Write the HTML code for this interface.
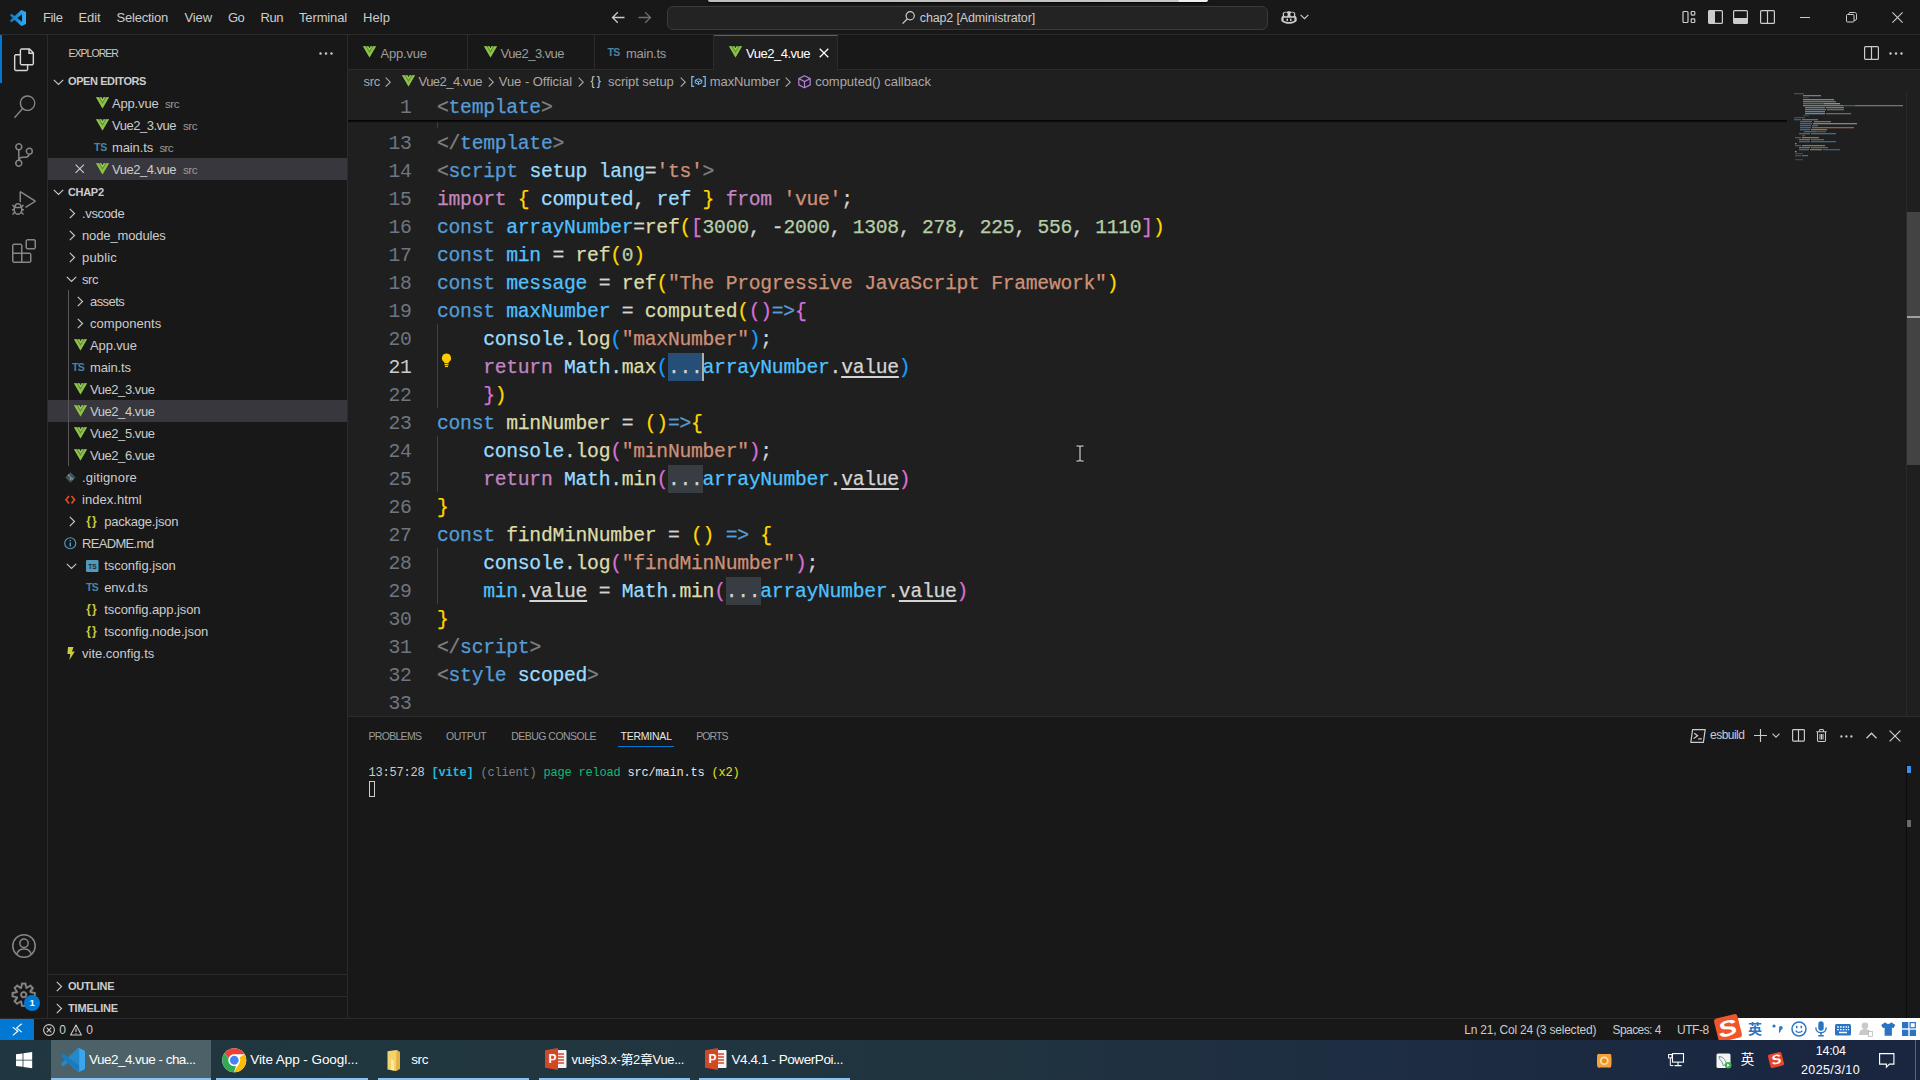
<!DOCTYPE html>
<html lang="en"><head><meta charset="utf-8"><title>Vue2_4.vue - chap2 - Visual Studio Code</title>
<style>
*{box-sizing:border-box;margin:0;padding:0}
html,body{width:1920px;height:1080px;overflow:hidden;background:#181818}
body{position:relative;font-family:"Liberation Sans","Noto Sans CJK SC",sans-serif;font-size:13px;color:#cccccc}
.a{position:absolute;white-space:pre}
svg{position:absolute;overflow:visible}
.cl{position:absolute;left:0;height:28px;width:1572px;white-space:pre;font-family:"Liberation Mono",monospace;font-size:19.7px;letter-spacing:-0.27px;line-height:28px}
.cl .num{position:absolute;left:0;top:2px;width:63.5px;text-align:right;color:#6e7681}
.cl .num.cur{color:#cccccc}
.cl .code{position:absolute;left:89px;top:2px;color:#d4d4d4;-webkit-text-stroke:0.25px}
.guide{position:absolute;width:1px;background:#404040}
</style></head>
<body>
<div class="a" style="left:0px;top:0px;width:1920px;height:35px;background:#181818;border-bottom:1px solid #2b2b2b"></div>
<div class="a" style="left:708px;top:0px;width:500px;height:2px;background:linear-gradient(90deg,#bdbdbd 0%,#c6c6c6 94%,#f0f0f0 94.2%,#f0f0f0 100%);border-radius:0 0 8px 8px;box-shadow:0 1px 2px #000"></div>
<svg style="left:10px;top:9.5px" width="16" height="16" viewBox="0 0 100 100" ><defs><linearGradient id="vsg" x1="0" y1="0" x2="1" y2="0"><stop offset="0" stop-color="#1072b8"/><stop offset="0.55" stop-color="#1f95e0"/><stop offset="1" stop-color="#35adf5"/></linearGradient></defs><path fill="url(#vsg)" fill-rule="evenodd" d="M70.9 99.3c1.6.6 3.4.6 5-.2l20.600-9.900c2.200-1 3.500-3.200 3.500-5.600V16.400c0-2.400-1.400-4.600-3.500-5.600L75.900.9c-2.100-1-4.500-.8-6.400.6-.3.2-.5.4-.8.7L29.400 38.100 12.200 25.100c-1.600-1.200-3.800-1.100-5.300.2l-5.500 5c-1.800 1.700-1.800 4.500 0 6.200L16.300 50 1.400 63.500c-1.800 1.700-1.800 4.500 0 6.200l5.500 5c1.500 1.400 3.700 1.500 5.300.2l17.200-13 39.400 35.900c.6.600 1.400 1.100 2.200 1.400zM75 27.300L45.100 50 75 72.700V27.300z"/></svg>
<span class="a" style="left:43.00px;top:7.00px;line-height:21px;font-size:13px;letter-spacing:-0.363px;color:#cccccc;">File</span>
<span class="a" style="left:78.50px;top:7.00px;line-height:21px;font-size:13px;letter-spacing:-0.102px;color:#cccccc;">Edit</span>
<span class="a" style="left:116.50px;top:7.00px;line-height:21px;font-size:13px;letter-spacing:-0.220px;color:#cccccc;">Selection</span>
<span class="a" style="left:184.50px;top:7.00px;line-height:21px;font-size:13px;letter-spacing:-0.113px;color:#cccccc;">View</span>
<span class="a" style="left:228.00px;top:7.00px;line-height:21px;font-size:13px;letter-spacing:-0.672px;color:#cccccc;">Go</span>
<span class="a" style="left:260.50px;top:7.00px;line-height:21px;font-size:13px;letter-spacing:-0.453px;color:#cccccc;">Run</span>
<span class="a" style="left:299.00px;top:7.00px;line-height:21px;font-size:13px;letter-spacing:-0.141px;color:#cccccc;">Terminal</span>
<span class="a" style="left:363.00px;top:7.00px;line-height:21px;font-size:13px;letter-spacing:0.062px;color:#cccccc;">Help</span>
<svg style="left:611px;top:11px" width="14" height="13" viewBox="0 0 14 13" ><path d="M13.500 6.500H1.800M6.800 1.200L1.500 6.500l5.300 5.300" fill="none" stroke="#cccccc" stroke-width="1.300"/></svg>
<svg style="left:638px;top:11px" width="14" height="13" viewBox="0 0 14 13" ><path d="M.5 6.500h11.700M7.200 1.200l5.300 5.300-5.300 5.300" fill="none" stroke="#6f6f6f" stroke-width="1.300"/></svg>
<div class="a" style="left:667px;top:5.5px;width:601px;height:24px;background:#232323;border:1px solid #3a3a3a;border-radius:6px"></div>
<svg style="left:901.5px;top:10.5px" width="13" height="13" viewBox="0 0 13 13" ><circle cx="8.200" cy="4.800" r="4.100" fill="none" stroke="#cccccc" stroke-width="1.200"/><path d="M5.400 7.800L.6 12.600" stroke="#cccccc" stroke-width="1.300"/></svg>
<span class="a" style="left:919.80px;top:7.50px;line-height:20px;font-size:12.5px;letter-spacing:-0.139px;color:#cccccc;">chap2 [Administrator]</span>
<svg style="left:1281px;top:10px" width="16" height="14" viewBox="0 0 16 14" ><path d="M8 1.200c-1.200 0-1.900.4-2.400.9-.7-.4-2.400-.5-3.300.5C1.500 3.500 1.600 5 1.900 5.800 1 6.500.3 7.600.3 8.600v1.600c0 .5.200.9.600 1.200C2.800 12.900 5.400 13.700 8 13.700s5.200-.8 7.100-2.300c.4-.3.600-.7.600-1.200V8.600c0-1-.7-2.100-1.600-2.800.3-.8.400-2.300-.4-3.200-.9-1-2.600-.9-3.300-.5-.5-.5-1.200-.9-2.400-.9z" fill="#cccccc"/><rect x="2.900" y="2.600" width="3.800" height="3.600" rx="1.500" fill="#181818"/><rect x="9.300" y="2.600" width="3.800" height="3.600" rx="1.500" fill="#181818"/><path d="M2.600 7.800h10.800v3c-1.700.9-3.500 1.300-5.400 1.300s-3.700-.4-5.400-1.300z" fill="#181818"/><rect x="5.500" y="8.400" width="1.500" height="2.600" rx=".5" fill="#cccccc"/><rect x="9" y="8.400" width="1.500" height="2.600" rx=".5" fill="#cccccc"/></svg>
<svg style="left:1300px;top:14px" width="9" height="6" viewBox="0 0 9 6" ><path d="M.6.800l3.900 3.900L8.400.8" fill="none" stroke="#cccccc" stroke-width="1.100"/></svg>
<svg style="left:1682px;top:10px" width="16" height="14" viewBox="0 0 16 14" ><rect x="1" y="1.500" width="5" height="11" rx="1" fill="none" stroke="#cccccc" stroke-width="1.200"/><rect x="9.200" y="1.500" width="3.600" height="3.600" rx=".8" fill="none" stroke="#cccccc" stroke-width="1.200"/><rect x="9.200" y="8.900" width="3.600" height="3.600" rx=".8" fill="none" stroke="#cccccc" stroke-width="1.200"/></svg>
<svg style="left:1707.5px;top:10px" width="15" height="14" viewBox="0 0 15 14" ><rect x=".6" y=".6" width="13.800" height="12.800" rx="1" fill="none" stroke="#cccccc" stroke-width="1.200"/><rect x=".6" y=".6" width="6.400" height="12.800" fill="#cccccc"/></svg>
<svg style="left:1733px;top:10px" width="15" height="14" viewBox="0 0 15 14" ><rect x=".6" y=".6" width="13.800" height="12.800" rx="1" fill="none" stroke="#cccccc" stroke-width="1.200"/><rect x=".6" y="8" width="13.800" height="5.400" fill="#cccccc"/></svg>
<svg style="left:1759.5px;top:10px" width="15" height="14" viewBox="0 0 15 14" ><rect x=".6" y=".6" width="13.800" height="12.800" rx="1" fill="none" stroke="#cccccc" stroke-width="1.200"/><path d="M7.500.6v12.800" stroke="#cccccc" stroke-width="1.200"/></svg>
<svg style="left:1800px;top:17px" width="10" height="1" viewBox="0 0 10 1" ><rect width="10" height="1" fill="#cccccc"/></svg>
<svg style="left:1845.5px;top:12px" width="11" height="11" viewBox="0 0 11 11" ><rect x=".5" y="2.500" width="7.500" height="7.500" rx="1" fill="none" stroke="#cccccc" stroke-width="1"/><path d="M2.700 2.500V1.800c0-.7.600-1.300 1.300-1.300h4.700c1 0 1.800.8 1.800 1.800V7c0 .7-.6 1.300-1.300 1.300H8" fill="none" stroke="#cccccc" stroke-width="1"/></svg>
<svg style="left:1892px;top:12px" width="11" height="11" viewBox="0 0 11 11" ><path d="M.4.400l10.200 10.200M10.600.4L.4 10.600" stroke="#cccccc" stroke-width="1.100"/></svg>
<div class="a" style="left:0px;top:35px;width:48px;height:983px;background:#181818;border-right:1px solid #2b2b2b"></div>
<div class="a" style="left:0px;top:35px;width:2px;height:48px;background:#0078d4;"></div>
<svg style="left:12.5px;top:47.5px" width="22" height="23.5" viewBox="0 0 23 24" ><path fill="#d7d7d7" d="M17.500 0h-9L7 1.500V6H2.500L1 7.500v15.070L2.500 24h12.070L16 22.570V18h4.700l1.300-1.430V4.500L17.500 0zm0 2.120l2.380 2.380H17.500V2.120zm-3 20.380h-12v-15H7v9.070L8.500 18h6v4.500zm6-6h-12v-15H16V6h4.500v10.500z"/></svg>
<svg style="left:13px;top:95px" width="23" height="23.5" viewBox="0 0 24 24" ><path fill="#868686" d="M15.250 0a8.250 8.250 0 0 0-6.180 13.720L1 22.880l1.120 1.120 8.050-9.120A8.251 8.251 0 1 0 15.250.010V0zm0 15a6.750 6.750 0 1 1 0-13.500 6.750 6.750 0 0 1 0 13.500z"/></svg>
<svg style="left:12px;top:143px" width="24" height="24" viewBox="0 0 24 24" ><path fill="#868686" d="M21.007 8.222A3.738 3.738 0 0 0 15.045 5.200a3.737 3.737 0 0 0 1.156 6.583 2.988 2.988 0 0 1-2.668 1.670h-2.990a4.456 4.456 0 0 0-2.989 1.165V7.400a3.737 3.737 0 1 0-1.494 0v9.117a3.776 3.776 0 1 0 1.816.099 2.990 2.990 0 0 1 2.668-1.667h2.990a4.484 4.484 0 0 0 4.223-3.039 3.736 3.736 0 0 0 3.250-3.687zM4.565 3.738a2.242 2.242 0 1 1 4.484 0 2.242 2.242 0 0 1-4.484 0zm4.484 16.441a2.242 2.242 0 1 1-4.484 0 2.242 2.242 0 0 1 4.484 0zm8.221-9.715a2.242 2.242 0 1 1 0-4.485 2.242 2.242 0 0 1 0 4.485z"/></svg>
<svg style="left:12px;top:191px" width="24" height="24" viewBox="0 0 24 24" ><path fill="#868686" d="M10.940 13.500l-1.320 1.320a3.730 3.730 0 0 0-7.240 0L1.060 13.500 0 14.560l1.720 1.720-.220.220V18H0v1.500h1.500v.080c.077.489.214.966.410 1.420L0 22.940 1.060 24l1.650-1.650A4.308 4.308 0 0 0 6 24a4.310 4.310 0 0 0 3.290-1.650L10.940 24 12 22.940 10.090 21c.198-.464.336-.951.410-1.450v-.1H12V18h-1.500v-1.500l-.220-.220L12 14.560l-1.060-1.060zM6 13.500a2.250 2.250 0 0 1 2.250 2.250h-4.500A2.250 2.250 0 0 1 6 13.500zm3 6a3.330 3.330 0 0 1-3 3 3.330 3.330 0 0 1-3-3v-2.250h6v2.250zm14.760-9.900v1.260L13.500 17.370V15.600l8.500-5.370L9 2v9.460a5.070 5.070 0 0 0-1.500-.720V.630L8.640 0l15.120 9.600z"/></svg>
<svg style="left:12px;top:239px" width="24" height="24" viewBox="0 0 24 24" ><path fill="#868686" d="M13.500 1.500L15 0h7.500L24 1.500V9l-1.500 1.500H15L13.500 9V1.500zm1.500 0V9h7.500V1.500H15zM0 15V6l1.500-1.500H9L10.500 6v7.500H18l1.500 1.500v7.500L18 24H1.500L0 22.500V15zm9-1.500V6H1.500v7.500H9zM9 15H1.500v7.500H9V15zm1.500 7.500H18V15h-7.500v7.500z"/></svg>
<svg style="left:12px;top:934px" width="24" height="24" viewBox="0 0 24 24" ><circle cx="12" cy="12" r="11.200" fill="none" stroke="#868686" stroke-width="1.500"/><circle cx="12" cy="9.300" r="4.200" fill="none" stroke="#868686" stroke-width="1.500"/><path d="M4.800 20.300c.8-3.300 3.700-5.300 7.200-5.300s6.400 2 7.200 5.300" fill="none" stroke="#868686" stroke-width="1.500"/></svg>
<svg style="left:10.3px;top:980.8px" width="27.4" height="27.4" viewBox="0 0 16 16" ><path fill="#868686" stroke="#868686" stroke-width=".15" fill-rule="evenodd" d="M9.100 4.400L8.600 2H7.400l-.500 2.400-.700.300-2-1.300-.900.800 1.300 2-.200.700-2.400.500v1.200l2.400.500.300.800-1.300 2 .800.800 2-1.300.800.300.400 2.300h1.200l.500-2.400.800-.300 2 1.300.800-.800-1.300-2 .300-.800 2.300-.400V7.400l-2.400-.500-.300-.800 1.300-2-.800-.800-2 1.300-.700-.200zM9.400 1l.500 2.400L12 2.100l2 2-1.400 2.100 2.400.400v2.800l-2.400.500L14 12l-2 2-2.100-1.400-.500 2.400H6.600l-.500-2.400L4 13.900l-2-2 1.400-2.100L1 9.400V6.600l2.400-.500L2.100 4l2-2 2.100 1.400.400-2.400h2.800zm.600 7c0 1.100-.900 2-2 2s-2-.900-2-2 .900-2 2-2 2 .900 2 2zM8 9c.600 0 1-.400 1-1s-.400-1-1-1-1 .400-1 1 .400 1 1 1z"/></svg>
<div class="a" style="left:24px;top:994.5px;width:16px;height:16px;background:#0078d4;border-radius:8px"></div>
<span class="a" style="left:29.50px;top:995.00px;line-height:15px;font-size:9.5px;font-weight:700;color:#ffffff;">1</span>
<div class="a" style="left:348px;top:35px;width:1572px;height:35px;background:#181818;border-bottom:1px solid #2b2b2b"></div>
<div class="a" style="left:467px;top:35px;width:1px;height:35px;background:#2b2b2b;"></div>
<div class="a" style="left:594px;top:35px;width:1px;height:35px;background:#2b2b2b;"></div>
<div class="a" style="left:713px;top:35px;width:1px;height:35px;background:#2b2b2b;"></div>
<div class="a" style="left:714px;top:35px;width:124px;height:35px;background:#1f1f1f;border-top:1px solid #0078d4;border-right:1px solid #2b2b2b"></div>
<svg style="left:363px;top:45.8px" width="13.0" height="11.700000000000001" viewBox="0 0 16 14" ><path d="M0 0h16L8 14z" fill="#5f8f30"/><path d="M6.300 0L8 2.900 9.700 0z" fill="#1b1b1b"/><path d="M0 0h3.200L8 8.400 12.800 0H16L8 14z" fill="#8dc149"/><path d="M4.700 0h1.900L8 2.500 9.400 0h1.900L8 5.800z" fill="#9ad255"/></svg>
<span class="a" style="left:380.50px;top:43.00px;line-height:21px;font-size:13px;letter-spacing:-0.208px;color:#9d9d9d;">App.vue</span>
<svg style="left:483.75px;top:45.8px" width="13.0" height="11.700000000000001" viewBox="0 0 16 14" ><path d="M0 0h16L8 14z" fill="#5f8f30"/><path d="M6.300 0L8 2.900 9.700 0z" fill="#1b1b1b"/><path d="M0 0h3.200L8 8.400 12.800 0H16L8 14z" fill="#8dc149"/><path d="M4.700 0h1.900L8 2.500 9.400 0h1.900L8 5.800z" fill="#9ad255"/></svg>
<span class="a" style="left:500.50px;top:43.00px;line-height:21px;font-size:13px;letter-spacing:-0.542px;color:#9d9d9d;">Vue2_3.vue</span>
<span class="a" style="left:607.50px;top:43.50px;line-height:17px;font-size:10.5px;font-weight:700;letter-spacing:-0.611px;color:#4884a6;">TS</span>
<span class="a" style="left:626.00px;top:43.00px;line-height:21px;font-size:13px;letter-spacing:-0.272px;color:#9d9d9d;">main.ts</span>
<svg style="left:729px;top:45.8px" width="13.0" height="11.700000000000001" viewBox="0 0 16 14" ><path d="M0 0h16L8 14z" fill="#5f8f30"/><path d="M6.300 0L8 2.900 9.700 0z" fill="#1b1b1b"/><path d="M0 0h3.200L8 8.400 12.800 0H16L8 14z" fill="#8dc149"/><path d="M4.700 0h1.900L8 2.500 9.400 0h1.900L8 5.800z" fill="#9ad255"/></svg>
<span class="a" style="left:746.00px;top:43.00px;line-height:21px;font-size:13px;letter-spacing:-0.492px;color:#ffffff;">Vue2_4.vue</span>
<svg style="left:819px;top:48px" width="10" height="10" viewBox="0 0 10 10" ><path d="M.7.700l8.600 8.600M9.300.700L.7 9.300" stroke="#ffffff" stroke-width="1.300"/></svg>
<svg style="left:1863.5px;top:46px" width="15" height="14" viewBox="0 0 15 14" ><rect x=".6" y=".6" width="13.800" height="12.800" rx="1" fill="none" stroke="#cccccc" stroke-width="1.200"/><path d="M7.500.6v12.800" stroke="#cccccc" stroke-width="1.200"/></svg>
<svg style="left:1889px;top:52px" width="14" height="3" viewBox="0 0 14 3" ><circle cx="1.500" cy="1.500" r="1.200" fill="#cccccc"/><circle cx="7" cy="1.500" r="1.200" fill="#cccccc"/><circle cx="12.500" cy="1.500" r="1.200" fill="#cccccc"/></svg>
<div class="a" style="left:0px;top:1018px;width:1920px;height:22px;background:#181818;border-top:1px solid #2b2b2b"></div>
<div class="a" style="left:0px;top:1019px;width:34px;height:21px;background:#0078d4;"></div>
<svg style="left:11px;top:1023px" width="13" height="13" viewBox="0 0 13 13" ><path d="M1.800 4.100L6.800 8.200 1.800 12.400M10.700.800L5.700 4.900l5 4.200" fill="none" stroke="#ffffff" stroke-width="1.150"/></svg>
<svg style="left:42.5px;top:1023.5px" width="12" height="12" viewBox="0 0 12 12" ><circle cx="6" cy="6" r="5.400" fill="none" stroke="#cccccc" stroke-width="1.100"/><path d="M3.700 3.700l4.600 4.600M8.300 3.700L3.700 8.300" stroke="#cccccc" stroke-width="1.100"/></svg>
<span class="a" style="left:59.25px;top:1020.70px;line-height:19px;font-size:12px;letter-spacing:-0.438px;color:#cccccc;">0</span>
<svg style="left:70px;top:1023.5px" width="12" height="12" viewBox="0 0 12 12" ><path d="M6 1L11.400 11H.6z" fill="none" stroke="#cccccc" stroke-width="1.100" stroke-linejoin="round"/><path d="M6 4.500v3.500M6 9v1.100" stroke="#cccccc" stroke-width="1.100"/></svg>
<span class="a" style="left:86.25px;top:1020.70px;line-height:19px;font-size:12px;letter-spacing:0.062px;color:#cccccc;">0</span>
<span class="a" style="left:1464.25px;top:1020.70px;line-height:19px;font-size:12px;letter-spacing:-0.209px;color:#cccccc;">Ln 21, Col 24 (3 selected)</span>
<span class="a" style="left:1612.50px;top:1020.70px;line-height:19px;font-size:12px;letter-spacing:-0.569px;color:#cccccc;">Spaces: 4</span>
<span class="a" style="left:1677.00px;top:1020.70px;line-height:19px;font-size:12px;letter-spacing:-0.450px;color:#cccccc;">UTF-8</span>
<div class="a" style="left:48px;top:35px;width:300px;height:983px;background:#181818;border-right:1px solid #2b2b2b"></div>
<span class="a" style="left:68.40px;top:44.90px;line-height:17px;font-size:10.5px;letter-spacing:-0.948px;color:#cccccc;">EXPLORER</span>
<svg style="left:318.5px;top:51.8px" width="14" height="3" viewBox="0 0 14 3" ><circle cx="1.500" cy="1.500" r="1.200" fill="#cccccc"/><circle cx="7" cy="1.500" r="1.200" fill="#cccccc"/><circle cx="12.500" cy="1.500" r="1.200" fill="#cccccc"/></svg>
<svg style="left:53px;top:78.5px" width="11" height="6.5" viewBox="0 0 11 6.5" ><path d="M.8.800l4.700 4.700L10.200.8" fill="none" stroke="#c5c5c5" stroke-width="1.200"/></svg>
<span class="a" style="left:68.00px;top:72.30px;line-height:18px;font-size:11px;font-weight:700;letter-spacing:-0.411px;color:#cccccc;">OPEN EDITORS</span>
<div class="a" style="left:48px;top:158px;width:299px;height:22px;background:#37373d;"></div>
<svg style="left:95.8px;top:97.0px" width="13.0" height="11.700000000000001" viewBox="0 0 16 14" ><path d="M0 0h16L8 14z" fill="#5f8f30"/><path d="M6.300 0L8 2.900 9.700 0z" fill="#1b1b1b"/><path d="M0 0h3.200L8 8.400 12.800 0H16L8 14z" fill="#8dc149"/><path d="M4.700 0h1.900L8 2.500 9.400 0h1.900L8 5.800z" fill="#9ad255"/></svg>
<span class="a" style="left:112.00px;top:93.20px;line-height:21px;font-size:13px;letter-spacing:-0.172px;color:#cccccc;">App.vue</span>
<span class="a" style="left:165.00px;top:94.30px;line-height:19px;font-size:11.7px;letter-spacing:-0.531px;color:#9a9a9a;">src</span>
<svg style="left:95.8px;top:119.0px" width="13.0" height="11.700000000000001" viewBox="0 0 16 14" ><path d="M0 0h16L8 14z" fill="#5f8f30"/><path d="M6.300 0L8 2.900 9.700 0z" fill="#1b1b1b"/><path d="M0 0h3.200L8 8.400 12.800 0H16L8 14z" fill="#8dc149"/><path d="M4.700 0h1.900L8 2.500 9.400 0h1.900L8 5.800z" fill="#9ad255"/></svg>
<span class="a" style="left:112.00px;top:115.20px;line-height:21px;font-size:13px;letter-spacing:-0.492px;color:#cccccc;">Vue2_3.vue</span>
<span class="a" style="left:183.00px;top:116.30px;line-height:19px;font-size:11.7px;letter-spacing:-0.531px;color:#9a9a9a;">src</span>
<span class="a" style="left:94.00px;top:139.20px;line-height:17px;font-size:10.5px;font-weight:700;letter-spacing:-0.211px;color:#4884a6;">TS</span>
<span class="a" style="left:112.00px;top:137.20px;line-height:21px;font-size:13px;letter-spacing:-0.129px;color:#cccccc;">main.ts</span>
<span class="a" style="left:159.40px;top:138.30px;line-height:19px;font-size:11.7px;letter-spacing:-0.665px;color:#9a9a9a;">src</span>
<svg style="left:95.8px;top:163.0px" width="13.0" height="11.700000000000001" viewBox="0 0 16 14" ><path d="M0 0h16L8 14z" fill="#5f8f30"/><path d="M6.300 0L8 2.900 9.700 0z" fill="#1b1b1b"/><path d="M0 0h3.200L8 8.400 12.800 0H16L8 14z" fill="#8dc149"/><path d="M4.700 0h1.900L8 2.500 9.400 0h1.900L8 5.800z" fill="#9ad255"/></svg>
<span class="a" style="left:112.00px;top:159.20px;line-height:21px;font-size:13px;letter-spacing:-0.492px;color:#cccccc;">Vue2_4.vue</span>
<span class="a" style="left:183.00px;top:160.30px;line-height:19px;font-size:11.7px;letter-spacing:-0.531px;color:#9a9a9a;">src</span>
<svg style="left:75.2px;top:164.3px" width="9.5" height="9.5" viewBox="0 0 9.5 9.5" ><path d="M.6.600l8.300 8.300M8.900.600L.6 8.900" stroke="#cccccc" stroke-width="1.150"/></svg>
<svg style="left:53px;top:189px" width="11" height="6.5" viewBox="0 0 11 6.5" ><path d="M.8.800l4.700 4.700L10.200.8" fill="none" stroke="#c5c5c5" stroke-width="1.200"/></svg>
<span class="a" style="left:68.00px;top:183.00px;line-height:18px;font-size:11px;font-weight:700;letter-spacing:-0.319px;color:#cccccc;">CHAP2</span>
<div class="a" style="left:48px;top:400px;width:299px;height:22px;background:#37373d;"></div>
<div class="a" style="left:68px;top:290px;width:1px;height:176px;background:#585858;"></div>
<svg style="left:68.75px;top:207.8px" width="6.5" height="11" viewBox="0 0 6.5 11" ><path d="M.8.800l4.700 4.700-4.700 4.700" fill="none" stroke="#c5c5c5" stroke-width="1.200"/></svg>
<span class="a" style="left:82.00px;top:202.80px;line-height:21px;font-size:13px;letter-spacing:-0.366px;color:#cccccc;">.vscode</span>
<svg style="left:68.75px;top:229.9px" width="6.5" height="11" viewBox="0 0 6.5 11" ><path d="M.8.800l4.700 4.700-4.700 4.700" fill="none" stroke="#c5c5c5" stroke-width="1.200"/></svg>
<span class="a" style="left:82.00px;top:224.90px;line-height:21px;font-size:13px;letter-spacing:-0.129px;color:#cccccc;">node_modules</span>
<svg style="left:68.75px;top:251.89999999999998px" width="6.5" height="11" viewBox="0 0 6.5 11" ><path d="M.8.800l4.700 4.700-4.700 4.700" fill="none" stroke="#c5c5c5" stroke-width="1.200"/></svg>
<span class="a" style="left:82.00px;top:246.90px;line-height:21px;font-size:13px;letter-spacing:0.172px;color:#cccccc;">public</span>
<svg style="left:65.5px;top:276.4px" width="11" height="6.5" viewBox="0 0 11 6.5" ><path d="M.8.800l4.700 4.700L10.200.8" fill="none" stroke="#c5c5c5" stroke-width="1.200"/></svg>
<span class="a" style="left:82.00px;top:268.90px;line-height:21px;font-size:13px;letter-spacing:-0.448px;color:#cccccc;">src</span>
<svg style="left:76.75px;top:296.1px" width="6.5" height="11" viewBox="0 0 6.5 11" ><path d="M.8.800l4.700 4.700-4.700 4.700" fill="none" stroke="#c5c5c5" stroke-width="1.200"/></svg>
<span class="a" style="left:90.00px;top:291.10px;line-height:21px;font-size:13px;letter-spacing:-0.555px;color:#cccccc;">assets</span>
<svg style="left:76.75px;top:318.0px" width="6.5" height="11" viewBox="0 0 6.5 11" ><path d="M.8.800l4.700 4.700-4.700 4.700" fill="none" stroke="#c5c5c5" stroke-width="1.200"/></svg>
<span class="a" style="left:90.00px;top:313.00px;line-height:21px;font-size:13px;letter-spacing:0.042px;color:#cccccc;">components</span>
<svg style="left:73.75px;top:338.7px" width="13.0" height="11.700000000000001" viewBox="0 0 16 14" ><path d="M0 0h16L8 14z" fill="#5f8f30"/><path d="M6.300 0L8 2.900 9.700 0z" fill="#1b1b1b"/><path d="M0 0h3.200L8 8.400 12.800 0H16L8 14z" fill="#8dc149"/><path d="M4.700 0h1.900L8 2.500 9.400 0h1.900L8 5.800z" fill="#9ad255"/></svg>
<span class="a" style="left:90.00px;top:335.00px;line-height:21px;font-size:13px;letter-spacing:-0.136px;color:#cccccc;">App.vue</span>
<span class="a" style="left:72.00px;top:359.10px;line-height:17px;font-size:10.5px;font-weight:700;letter-spacing:-0.586px;color:#4884a6;">TS</span>
<span class="a" style="left:90.00px;top:357.00px;line-height:21px;font-size:13px;letter-spacing:-0.165px;color:#cccccc;">main.ts</span>
<svg style="left:73.75px;top:382.7px" width="13.0" height="11.700000000000001" viewBox="0 0 16 14" ><path d="M0 0h16L8 14z" fill="#5f8f30"/><path d="M6.300 0L8 2.900 9.700 0z" fill="#1b1b1b"/><path d="M0 0h3.200L8 8.400 12.800 0H16L8 14z" fill="#8dc149"/><path d="M4.700 0h1.900L8 2.500 9.400 0h1.900L8 5.800z" fill="#9ad255"/></svg>
<span class="a" style="left:90.00px;top:379.00px;line-height:21px;font-size:13px;letter-spacing:-0.442px;color:#cccccc;">Vue2_3.vue</span>
<svg style="left:73.75px;top:404.7px" width="13.0" height="11.700000000000001" viewBox="0 0 16 14" ><path d="M0 0h16L8 14z" fill="#5f8f30"/><path d="M6.300 0L8 2.900 9.700 0z" fill="#1b1b1b"/><path d="M0 0h3.200L8 8.400 12.800 0H16L8 14z" fill="#8dc149"/><path d="M4.700 0h1.900L8 2.500 9.400 0h1.900L8 5.800z" fill="#9ad255"/></svg>
<span class="a" style="left:90.00px;top:401.00px;line-height:21px;font-size:13px;letter-spacing:-0.442px;color:#cccccc;">Vue2_4.vue</span>
<svg style="left:73.75px;top:426.7px" width="13.0" height="11.700000000000001" viewBox="0 0 16 14" ><path d="M0 0h16L8 14z" fill="#5f8f30"/><path d="M6.300 0L8 2.900 9.700 0z" fill="#1b1b1b"/><path d="M0 0h3.200L8 8.400 12.800 0H16L8 14z" fill="#8dc149"/><path d="M4.700 0h1.900L8 2.500 9.400 0h1.900L8 5.800z" fill="#9ad255"/></svg>
<span class="a" style="left:90.00px;top:423.00px;line-height:21px;font-size:13px;letter-spacing:-0.442px;color:#cccccc;">Vue2_5.vue</span>
<svg style="left:73.75px;top:448.7px" width="13.0" height="11.700000000000001" viewBox="0 0 16 14" ><path d="M0 0h16L8 14z" fill="#5f8f30"/><path d="M6.300 0L8 2.900 9.700 0z" fill="#1b1b1b"/><path d="M0 0h3.200L8 8.400 12.800 0H16L8 14z" fill="#8dc149"/><path d="M4.700 0h1.900L8 2.500 9.400 0h1.900L8 5.800z" fill="#9ad255"/></svg>
<span class="a" style="left:90.00px;top:445.00px;line-height:21px;font-size:13px;letter-spacing:-0.442px;color:#cccccc;">Vue2_6.vue</span>
<svg style="left:64.5px;top:472px" width="11" height="11" viewBox="0 0 11 11" ><path d="M5.500.3l5.200 5.200-5.200 5.200L.3 5.500z" fill="#41535b"/><path d="M3.600 3.200l3.600 3.600M5.400 5v3" stroke="#8a9aa2" stroke-width="1" fill="none"/><circle cx="3.600" cy="3.200" r=".9" fill="#8a9aa2"/><circle cx="7.200" cy="6.800" r=".9" fill="#8a9aa2"/></svg>
<span class="a" style="left:82.00px;top:467.00px;line-height:21px;font-size:13px;letter-spacing:0.152px;color:#cccccc;">.gitignore</span>
<svg style="left:65px;top:495px" width="10.5" height="9.5" viewBox="0 0 10.5 9.5" ><path d="M4 1L1 4.750 4 8.500M6.500 1l3 3.750-3 3.750" fill="none" stroke="#e44d26" stroke-width="1.700"/></svg>
<span class="a" style="left:82.00px;top:489.00px;line-height:21px;font-size:13px;letter-spacing:0.050px;color:#cccccc;">index.html</span>
<svg style="left:68.75px;top:516.0px" width="6.5" height="11" viewBox="0 0 6.5 11" ><path d="M.8.800l4.700 4.700-4.700 4.700" fill="none" stroke="#c5c5c5" stroke-width="1.200"/></svg>
<span class="a" style="left:86.25px;top:511.50px;line-height:19px;font-size:12px;font-weight:700;letter-spacing:1.203px;color:#cbcb41;">{}</span>
<span class="a" style="left:104.25px;top:511.00px;line-height:21px;font-size:13px;letter-spacing:-0.219px;color:#cccccc;">package.json</span>
<svg style="left:63.75px;top:537.3px" width="12.5" height="12.5" viewBox="0 0 12.5 12.5" ><circle cx="6.250" cy="6.250" r="5.500" fill="none" stroke="#519aba" stroke-width="1.200"/><path d="M6.250 5.400v4M6.250 3v1.300" stroke="#519aba" stroke-width="1.500"/></svg>
<span class="a" style="left:82.00px;top:533.00px;line-height:21px;font-size:13px;letter-spacing:-0.672px;color:#cccccc;">README.md</span>
<svg style="left:65.5px;top:562.5px" width="11" height="6.5" viewBox="0 0 11 6.5" ><path d="M.8.800l4.700 4.700L10.200.8" fill="none" stroke="#c5c5c5" stroke-width="1.200"/></svg>
<svg style="left:85.75px;top:559.5px" width="12.5" height="12" viewBox="0 0 12.5 12" ><rect width="12.500" height="12" rx="1.200" fill="#519aba"/></svg>
<span class="a" style="left:88.20px;top:562.00px;line-height:10px;font-size:6.5px;font-weight:700;letter-spacing:-0.006px;color:#1b2b34;">TS</span>
<span class="a" style="left:104.25px;top:555.00px;line-height:21px;font-size:13px;letter-spacing:-0.059px;color:#cccccc;">tsconfig.json</span>
<span class="a" style="left:86.00px;top:579.10px;line-height:17px;font-size:10.5px;font-weight:700;letter-spacing:-0.611px;color:#4884a6;">TS</span>
<span class="a" style="left:104.25px;top:577.00px;line-height:21px;font-size:13px;letter-spacing:-0.164px;color:#cccccc;">env.d.ts</span>
<span class="a" style="left:86.25px;top:599.50px;line-height:19px;font-size:12px;font-weight:700;letter-spacing:1.203px;color:#cbcb41;">{}</span>
<span class="a" style="left:104.25px;top:599.00px;line-height:21px;font-size:13px;letter-spacing:-0.078px;color:#cccccc;">tsconfig.app.json</span>
<span class="a" style="left:86.25px;top:621.50px;line-height:19px;font-size:12px;font-weight:700;letter-spacing:1.203px;color:#cbcb41;">{}</span>
<span class="a" style="left:104.25px;top:621.00px;line-height:21px;font-size:13px;letter-spacing:-0.044px;color:#cccccc;">tsconfig.node.json</span>
<svg style="left:67px;top:646.5px" width="8" height="13" viewBox="0 0 8 13" ><path d="M1 0h5.500L5 4.600h2.800L2.400 13l.9-6H.4z" fill="#cbcb41"/></svg>
<span class="a" style="left:82.00px;top:643.00px;line-height:21px;font-size:13px;letter-spacing:-0.001px;color:#cccccc;">vite.config.ts</span>
<div class="a" style="left:48px;top:974px;width:299px;height:1px;background:#2b2b2b;"></div>
<div class="a" style="left:48px;top:996px;width:299px;height:1px;background:#2b2b2b;"></div>
<svg style="left:55.5px;top:980.75px" width="6.5" height="11" viewBox="0 0 6.5 11" ><path d="M.8.800l4.700 4.700-4.700 4.700" fill="none" stroke="#c5c5c5" stroke-width="1.200"/></svg>
<span class="a" style="left:68.00px;top:977.25px;line-height:18px;font-size:11px;font-weight:700;letter-spacing:-0.290px;color:#cccccc;">OUTLINE</span>
<svg style="left:55.5px;top:1002.5px" width="6.5" height="11" viewBox="0 0 6.5 11" ><path d="M.8.800l4.700 4.700-4.700 4.700" fill="none" stroke="#c5c5c5" stroke-width="1.200"/></svg>
<span class="a" style="left:68.00px;top:999.00px;line-height:18px;font-size:11px;font-weight:700;letter-spacing:-0.168px;color:#cccccc;">TIMELINE</span>
<div class="a" style="left:348px;top:70px;width:1572px;height:646px;background:#1f1f1f;"></div>
<span class="a" style="left:363.50px;top:71.00px;line-height:21px;font-size:13px;letter-spacing:-0.281px;color:#a9a9a9;">src</span>
<svg style="left:385px;top:76.5px" width="6" height="10.5" viewBox="0 0 6 10.5" ><path d="M.7.700l4.500 4.500-4.500 4.500" fill="none" stroke="#a9a9a9" stroke-width="1.150"/></svg>
<svg style="left:401.75px;top:75.3px" width="13.0" height="11.700000000000001" viewBox="0 0 16 14" ><path d="M0 0h16L8 14z" fill="#5f8f30"/><path d="M6.300 0L8 2.900 9.700 0z" fill="#1b1b1b"/><path d="M0 0h3.200L8 8.400 12.800 0H16L8 14z" fill="#8dc149"/><path d="M4.700 0h1.900L8 2.500 9.400 0h1.900L8 5.800z" fill="#9ad255"/></svg>
<span class="a" style="left:418.50px;top:71.00px;line-height:21px;font-size:13px;letter-spacing:-0.542px;color:#a9a9a9;">Vue2_4.vue</span>
<svg style="left:487.5px;top:76.5px" width="6" height="10.5" viewBox="0 0 6 10.5" ><path d="M.7.700l4.500 4.500-4.500 4.500" fill="none" stroke="#a9a9a9" stroke-width="1.150"/></svg>
<span class="a" style="left:498.75px;top:71.00px;line-height:21px;font-size:13px;letter-spacing:-0.032px;color:#a9a9a9;">Vue - Official</span>
<svg style="left:577.5px;top:76.5px" width="6" height="10.5" viewBox="0 0 6 10.5" ><path d="M.7.700l4.500 4.500-4.500 4.500" fill="none" stroke="#a9a9a9" stroke-width="1.150"/></svg>
<span class="a" style="left:590.50px;top:71.00px;line-height:20px;font-size:12.5px;letter-spacing:2.070px;color:#cccccc;">{}</span>
<span class="a" style="left:608.00px;top:71.00px;line-height:21px;font-size:13px;letter-spacing:-0.061px;color:#a9a9a9;">script setup</span>
<svg style="left:679.5px;top:76.5px" width="6" height="10.5" viewBox="0 0 6 10.5" ><path d="M.7.700l4.500 4.500-4.500 4.500" fill="none" stroke="#a9a9a9" stroke-width="1.150"/></svg>
<svg style="left:690.5px;top:76px" width="15" height="11" viewBox="0 0 15 11" ><path d="M3.200.700H.8v9.600h2.400M11.800.700h2.400v9.600h-2.400" fill="none" stroke="#75beff" stroke-width="1.200"/><path d="M4.200 4.300l3.300-1.500 3.300 1.500v2.600L7.500 8.400 4.200 6.900z" fill="none" stroke="#75beff" stroke-width="1"/><path d="M4.200 4.300l3.300 1.500 3.300-1.500M7.500 5.800v2.600" fill="none" stroke="#75beff" stroke-width="1"/></svg>
<span class="a" style="left:709.75px;top:71.00px;line-height:21px;font-size:13px;letter-spacing:-0.089px;color:#a9a9a9;">maxNumber</span>
<svg style="left:785px;top:76.5px" width="6" height="10.5" viewBox="0 0 6 10.5" ><path d="M.7.700l4.500 4.500-4.500 4.500" fill="none" stroke="#a9a9a9" stroke-width="1.150"/></svg>
<svg style="left:798px;top:75px" width="13" height="13.5" viewBox="0 0 13 13.5" ><path d="M6.500.700l5.700 2.900v6.300l-5.700 2.900L.8 9.900V3.600z" fill="none" stroke="#b180d7" stroke-width="1.200" stroke-linejoin="round"/><path d="M.8 3.600l5.700 2.900 5.700-2.900M6.500 6.500v6.300" fill="none" stroke="#b180d7" stroke-width="1.200"/></svg>
<span class="a" style="left:815.20px;top:71.00px;line-height:21px;font-size:13px;letter-spacing:-0.028px;color:#a9a9a9;">computed() callback</span>
<div class="a" style="left:348px;top:70px;width:1572px;height:646px;overflow:hidden">
<div class="guide" style="left:89px;top:50px;height:8px"></div>
<div class="guide" style="left:89px;top:254px;height:84px"></div>
<div class="guide" style="left:89px;top:366px;height:56px"></div>
<div class="guide" style="left:89px;top:478px;height:56px"></div>
<div class="a" style="left:320px;top:283px;width:35px;height:28px;background:#264f78;"></div>
<div class="a" style="left:320px;top:395px;width:35px;height:28px;background:#373d43;"></div>
<div class="a" style="left:378px;top:507px;width:35px;height:28px;background:#373d43;"></div>
<div class="cl" style="top:58px"><span class="num">13</span><span class="code"><span style="color:#808080">&lt;/</span><span style="color:#569cd6">template</span><span style="color:#808080">&gt;</span></span></div>
<div class="cl" style="top:86px"><span class="num">14</span><span class="code"><span style="color:#808080">&lt;</span><span style="color:#569cd6">script</span><span style="color:#d4d4d4"> </span><span style="color:#9cdcfe">setup</span><span style="color:#d4d4d4"> </span><span style="color:#9cdcfe">lang</span><span style="color:#d4d4d4">=</span><span style="color:#ce9178">'ts'</span><span style="color:#808080">&gt;</span></span></div>
<div class="cl" style="top:114px"><span class="num">15</span><span class="code"><span style="color:#c586c0">import</span><span style="color:#d4d4d4"> </span><span style="color:#ffd700">{</span><span style="color:#d4d4d4"> </span><span style="color:#9cdcfe">computed</span><span style="color:#d4d4d4">, </span><span style="color:#9cdcfe">ref</span><span style="color:#d4d4d4"> </span><span style="color:#ffd700">}</span><span style="color:#d4d4d4"> </span><span style="color:#c586c0">from</span><span style="color:#d4d4d4"> </span><span style="color:#ce9178">'vue'</span><span style="color:#d4d4d4">;</span></span></div>
<div class="cl" style="top:142px"><span class="num">16</span><span class="code"><span style="color:#569cd6">const</span><span style="color:#d4d4d4"> </span><span style="color:#4fc1ff">arrayNumber</span><span style="color:#d4d4d4">=</span><span style="color:#dcdcaa">ref</span><span style="color:#ffd700">(</span><span style="color:#da70d6">[</span><span style="color:#b5cea8">3000</span><span style="color:#d4d4d4">, -</span><span style="color:#b5cea8">2000</span><span style="color:#d4d4d4">, </span><span style="color:#b5cea8">1308</span><span style="color:#d4d4d4">, </span><span style="color:#b5cea8">278</span><span style="color:#d4d4d4">, </span><span style="color:#b5cea8">225</span><span style="color:#d4d4d4">, </span><span style="color:#b5cea8">556</span><span style="color:#d4d4d4">, </span><span style="color:#b5cea8">1110</span><span style="color:#da70d6">]</span><span style="color:#ffd700">)</span></span></div>
<div class="cl" style="top:170px"><span class="num">17</span><span class="code"><span style="color:#569cd6">const</span><span style="color:#d4d4d4"> </span><span style="color:#4fc1ff">min</span><span style="color:#d4d4d4"> = </span><span style="color:#dcdcaa">ref</span><span style="color:#ffd700">(</span><span style="color:#b5cea8">0</span><span style="color:#ffd700">)</span></span></div>
<div class="cl" style="top:198px"><span class="num">18</span><span class="code"><span style="color:#569cd6">const</span><span style="color:#d4d4d4"> </span><span style="color:#4fc1ff">message</span><span style="color:#d4d4d4"> = </span><span style="color:#dcdcaa">ref</span><span style="color:#ffd700">(</span><span style="color:#ce9178">"The Progressive JavaScript Framework"</span><span style="color:#ffd700">)</span></span></div>
<div class="cl" style="top:226px"><span class="num">19</span><span class="code"><span style="color:#569cd6">const</span><span style="color:#d4d4d4"> </span><span style="color:#4fc1ff">maxNumber</span><span style="color:#d4d4d4"> = </span><span style="color:#dcdcaa">computed</span><span style="color:#ffd700">(</span><span style="color:#da70d6">()</span><span style="color:#569cd6">=&gt;</span><span style="color:#da70d6">{</span></span></div>
<div class="cl" style="top:254px"><span class="num">20</span><span class="code"><span style="color:#d4d4d4">    </span><span style="color:#9cdcfe">console</span><span style="color:#d4d4d4">.</span><span style="color:#dcdcaa">log</span><span style="color:#179fff">(</span><span style="color:#ce9178">"maxNumber"</span><span style="color:#179fff">)</span><span style="color:#d4d4d4">;</span></span></div>
<div class="cl" style="top:282px"><span class="num cur">21</span><span class="code"><span style="color:#d4d4d4">    </span><span style="color:#c586c0">return</span><span style="color:#d4d4d4"> </span><span style="color:#9cdcfe">Math</span><span style="color:#d4d4d4">.</span><span style="color:#dcdcaa">max</span><span style="color:#179fff">(</span><span style="color:#d4d4d4">...</span><span style="color:#4fc1ff">arrayNumber</span><span style="color:#d4d4d4">.</span><span style="color:#d4d4d4;text-decoration:underline;text-underline-offset:3px;text-decoration-thickness:1.5px">value</span><span style="color:#179fff">)</span></span></div>
<div class="cl" style="top:310px"><span class="num">22</span><span class="code"><span style="color:#d4d4d4">    </span><span style="color:#da70d6">}</span><span style="color:#ffd700">)</span></span></div>
<div class="cl" style="top:338px"><span class="num">23</span><span class="code"><span style="color:#569cd6">const</span><span style="color:#d4d4d4"> </span><span style="color:#dcdcaa">minNumber</span><span style="color:#d4d4d4"> = </span><span style="color:#ffd700">()</span><span style="color:#569cd6">=&gt;</span><span style="color:#ffd700">{</span></span></div>
<div class="cl" style="top:366px"><span class="num">24</span><span class="code"><span style="color:#d4d4d4">    </span><span style="color:#9cdcfe">console</span><span style="color:#d4d4d4">.</span><span style="color:#dcdcaa">log</span><span style="color:#da70d6">(</span><span style="color:#ce9178">"minNumber"</span><span style="color:#da70d6">)</span><span style="color:#d4d4d4">;</span></span></div>
<div class="cl" style="top:394px"><span class="num">25</span><span class="code"><span style="color:#d4d4d4">    </span><span style="color:#c586c0">return</span><span style="color:#d4d4d4"> </span><span style="color:#9cdcfe">Math</span><span style="color:#d4d4d4">.</span><span style="color:#dcdcaa">min</span><span style="color:#da70d6">(</span><span style="color:#d4d4d4">...</span><span style="color:#4fc1ff">arrayNumber</span><span style="color:#d4d4d4">.</span><span style="color:#d4d4d4;text-decoration:underline;text-underline-offset:3px;text-decoration-thickness:1.5px">value</span><span style="color:#da70d6">)</span></span></div>
<div class="cl" style="top:422px"><span class="num">26</span><span class="code"><span style="color:#ffd700">}</span></span></div>
<div class="cl" style="top:450px"><span class="num">27</span><span class="code"><span style="color:#569cd6">const</span><span style="color:#d4d4d4"> </span><span style="color:#dcdcaa">findMinNumber</span><span style="color:#d4d4d4"> = </span><span style="color:#ffd700">()</span><span style="color:#d4d4d4"> </span><span style="color:#569cd6">=&gt;</span><span style="color:#d4d4d4"> </span><span style="color:#ffd700">{</span></span></div>
<div class="cl" style="top:478px"><span class="num">28</span><span class="code"><span style="color:#d4d4d4">    </span><span style="color:#9cdcfe">console</span><span style="color:#d4d4d4">.</span><span style="color:#dcdcaa">log</span><span style="color:#da70d6">(</span><span style="color:#ce9178">"findMinNumber"</span><span style="color:#da70d6">)</span><span style="color:#d4d4d4">;</span></span></div>
<div class="cl" style="top:506px"><span class="num">29</span><span class="code"><span style="color:#d4d4d4">    </span><span style="color:#4fc1ff">min</span><span style="color:#d4d4d4">.</span><span style="color:#d4d4d4;text-decoration:underline;text-underline-offset:3px;text-decoration-thickness:1.5px">value</span><span style="color:#d4d4d4"> = </span><span style="color:#9cdcfe">Math</span><span style="color:#d4d4d4">.</span><span style="color:#dcdcaa">min</span><span style="color:#da70d6">(</span><span style="color:#d4d4d4">...</span><span style="color:#4fc1ff">arrayNumber</span><span style="color:#d4d4d4">.</span><span style="color:#d4d4d4;text-decoration:underline;text-underline-offset:3px;text-decoration-thickness:1.5px">value</span><span style="color:#da70d6">)</span></span></div>
<div class="cl" style="top:534px"><span class="num">30</span><span class="code"><span style="color:#ffd700">}</span></span></div>
<div class="cl" style="top:562px"><span class="num">31</span><span class="code"><span style="color:#808080">&lt;/</span><span style="color:#569cd6">script</span><span style="color:#808080">&gt;</span></span></div>
<div class="cl" style="top:590px"><span class="num">32</span><span class="code"><span style="color:#808080">&lt;</span><span style="color:#569cd6">style</span><span style="color:#d4d4d4"> </span><span style="color:#9cdcfe">scoped</span><span style="color:#808080">&gt;</span></span></div>
<div class="cl" style="top:618px"><span class="num">33</span><span class="code"></span></div>
<div class="a" style="left:354px;top:283px;width:2px;height:28px;background:#aeafad;"></div>
<svg style="left:92.5px;top:283px" width="11" height="15" viewBox="0 0 11 15" ><path d="M5.500.5a4.600 4.600 0 0 0-2.700 8.300c.5.400.7.900.7 1.400h4c0-.5.200-1 .7-1.400A4.600 4.600 0 0 0 5.500.5z" fill="#ffcc00"/><rect x="3.500" y="10.900" width="4" height="1.300" fill="#ffcc00"/><rect x="3.900" y="12.800" width="3.200" height="1.300" fill="#ffcc00"/></svg>
<div class="a" style="left:0px;top:50px;width:1439px;height:3px;background:linear-gradient(180deg,#000000 0%,#0a0a0a 40%,rgba(0,0,0,0) 100%);"></div>
<div class="a" style="left:0;top:22px;width:1439px;height:28px;background:#1f1f1f"><div class="cl" style="top:0"><span class="num">1</span><span class="code"><span style="color:#808080">&lt;</span><span style="color:#569cd6">template</span><span style="color:#808080">&gt;</span></span></div></div>
</div>
<svg style="left:1793.5px;top:93px" width="112" height="70" viewBox="0 0 112 70" ><rect x="0" y="0" width="10" height="1.300" fill="#4f83b3" opacity="0.5"/><rect x="9" y="2" width="18" height="1.300" fill="#c8c8c8" opacity="0.55"/><rect x="9" y="4" width="6" height="1.300" fill="#8a8a8a" opacity="0.3"/><rect x="9" y="6" width="31" height="1.300" fill="#c8c8c8" opacity="0.6"/><rect x="9" y="8" width="33" height="1.300" fill="#9fbf9a" opacity="0.6"/><rect x="9" y="10" width="37" height="1.300" fill="#9fbf9a" opacity="0.5"/><rect x="30" y="10" width="16" height="1.300" fill="#c8c8c8" opacity="0.4"/><rect x="9" y="12" width="40" height="1.300" fill="#c8c8c8" opacity="0.55"/><rect x="49" y="12" width="12" height="1.300" fill="#4f83b3" opacity="0.6"/><rect x="61" y="12" width="48" height="1.300" fill="#c8c8c8" opacity="0.5"/><rect x="11" y="14" width="20" height="1.300" fill="#8fc7e8" opacity="0.6"/><rect x="32" y="14" width="18" height="1.300" fill="#c8c8c8" opacity="0.55"/><rect x="11" y="16" width="21" height="1.300" fill="#8fc7e8" opacity="0.55"/><rect x="33" y="16" width="17" height="1.300" fill="#9fbf9a" opacity="0.5"/><rect x="11" y="18" width="20" height="1.300" fill="#8fc7e8" opacity="0.6"/><rect x="11" y="20" width="20" height="1.300" fill="#8fc7e8" opacity="0.65"/><rect x="32" y="20" width="25" height="1.300" fill="#c8c8c8" opacity="0.45"/><rect x="9" y="22" width="6" height="1.300" fill="#8a8a8a" opacity="0.3"/><rect x="0" y="24" width="11" height="1.300" fill="#4f83b3" opacity="0.5"/><rect x="0" y="26" width="7" height="1.300" fill="#4f83b3" opacity="0.6"/><rect x="8" y="26" width="16" height="1.300" fill="#8fc7e8" opacity="0.5"/><rect x="6" y="28" width="12" height="1.300" fill="#b884b4" opacity="0.55"/><rect x="20" y="28" width="17" height="1.300" fill="#c8c8c8" opacity="0.5"/><rect x="6" y="30" width="12" height="1.300" fill="#4f83b3" opacity="0.7"/><rect x="19" y="30" width="44" height="1.300" fill="#c8c8c8" opacity="0.6"/><rect x="6" y="32" width="11" height="1.300" fill="#4f83b3" opacity="0.7"/><rect x="18" y="32" width="6" height="1.300" fill="#c8c8c8" opacity="0.4"/><rect x="6" y="34" width="11" height="1.300" fill="#4f83b3" opacity="0.7"/><rect x="18" y="34" width="42" height="1.300" fill="#c88a70" opacity="0.65"/><rect x="6" y="36" width="10" height="1.300" fill="#4f83b3" opacity="0.7"/><rect x="17" y="36" width="16" height="1.300" fill="#d0c890" opacity="0.55"/><rect x="10" y="38" width="12" height="1.300" fill="#8fc7e8" opacity="0.4"/><rect x="22" y="38" width="10" height="1.300" fill="#c88a70" opacity="0.4"/><rect x="5" y="40" width="11" height="1.300" fill="#b884b4" opacity="0.55"/><rect x="17" y="40" width="25" height="1.300" fill="#4aa8e0" opacity="0.6"/><rect x="8" y="42" width="3" height="1.300" fill="#b884b4" opacity="0.4"/><rect x="1" y="44" width="6" height="1.300" fill="#4f83b3" opacity="0.6"/><rect x="8" y="44" width="17" height="1.300" fill="#d0c890" opacity="0.55"/><rect x="5" y="46" width="11" height="1.300" fill="#8fc7e8" opacity="0.5"/><rect x="17" y="46" width="13" height="1.300" fill="#c88a70" opacity="0.55"/><rect x="5" y="48" width="11" height="1.300" fill="#b884b4" opacity="0.5"/><rect x="17" y="48" width="25" height="1.300" fill="#4aa8e0" opacity="0.55"/><rect x="1" y="50" width="1.5" height="1.300" fill="#ffd700" opacity="0.7"/><rect x="1" y="52" width="6" height="1.300" fill="#4f83b3" opacity="0.6"/><rect x="8" y="52" width="23" height="1.300" fill="#d0c890" opacity="0.55"/><rect x="5" y="54" width="11" height="1.300" fill="#8fc7e8" opacity="0.5"/><rect x="17" y="54" width="17" height="1.300" fill="#c88a70" opacity="0.55"/><rect x="5" y="56" width="10" height="1.300" fill="#4aa8e0" opacity="0.55"/><rect x="16" y="56" width="12" height="1.300" fill="#c8c8c8" opacity="0.5"/><rect x="29" y="56" width="17" height="1.300" fill="#4aa8e0" opacity="0.5"/><rect x="1" y="58" width="1.5" height="1.300" fill="#ffd700" opacity="0.7"/><rect x="1" y="60" width="8" height="1.300" fill="#4f83b3" opacity="0.45"/><rect x="1" y="62" width="6" height="1.300" fill="#4f83b3" opacity="0.5"/><rect x="8" y="62" width="6" height="1.300" fill="#8fc7e8" opacity="0.45"/><rect x="1" y="66" width="8" height="1.300" fill="#4f83b3" opacity="0.4"/></svg>
<div class="a" style="left:1906px;top:92px;width:14px;height:624px;background:#1f1f1f;border-left:1px solid #2a2a2a"></div>
<div class="a" style="left:1907px;top:212px;width:13px;height:253px;background:#434343;"></div>
<div class="a" style="left:1907px;top:316px;width:13px;height:2px;background:#a0a0a0;"></div>
<div class="a" style="left:348px;top:716px;width:1572px;height:302px;background:#181818;border-top:1px solid #2b2b2b"></div>
<span class="a" style="left:368.50px;top:727.50px;line-height:17px;font-size:10.5px;letter-spacing:-0.701px;color:#9d9d9d;">PROBLEMS</span>
<span class="a" style="left:446.00px;top:727.50px;line-height:17px;font-size:10.5px;letter-spacing:-0.487px;color:#9d9d9d;">OUTPUT</span>
<span class="a" style="left:511.25px;top:727.50px;line-height:17px;font-size:10.5px;letter-spacing:-0.528px;color:#9d9d9d;">DEBUG CONSOLE</span>
<span class="a" style="left:620.50px;top:727.50px;line-height:17px;font-size:10.5px;letter-spacing:-0.230px;color:#e7e7e7;">TERMINAL</span>
<div class="a" style="left:618px;top:746px;width:56px;height:1px;background:#0078d4;"></div>
<span class="a" style="left:696.25px;top:727.50px;line-height:17px;font-size:10.5px;letter-spacing:-0.947px;color:#9d9d9d;">PORTS</span>
<span class="a" style="left:368.50px;top:763.50px;line-height:19px;font-size:12px;font-family:'Liberation Mono','Noto Sans CJK SC',monospace;letter-spacing:-0.201px;color:#cccccc;">13:57:28</span>
<span class="a" style="left:431.50px;top:763.50px;line-height:19px;font-size:12px;font-family:'Liberation Mono','Noto Sans CJK SC',monospace;font-weight:700;letter-spacing:-0.203px;color:#29b8db;">[vite]</span>
<span class="a" style="left:480.50px;top:763.50px;line-height:19px;font-size:12px;font-family:'Liberation Mono','Noto Sans CJK SC',monospace;letter-spacing:-0.201px;color:#7f7f7f;">(client)</span>
<span class="a" style="left:543.50px;top:763.50px;line-height:19px;font-size:12px;font-family:'Liberation Mono','Noto Sans CJK SC',monospace;letter-spacing:-0.202px;color:#0dbc79;">page reload</span>
<span class="a" style="left:627.50px;top:763.50px;line-height:19px;font-size:12px;font-family:'Liberation Mono','Noto Sans CJK SC',monospace;letter-spacing:-0.202px;color:#e5e5e5;">src/main.ts</span>
<span class="a" style="left:711.50px;top:763.50px;line-height:19px;font-size:12px;font-family:'Liberation Mono','Noto Sans CJK SC',monospace;letter-spacing:-0.203px;color:#e5e510;">(x2)</span>
<div class="a" style="left:368.5px;top:780.5px;width:6.5px;height:16px;background:transparent;border:1px solid #cccccc"></div>
<svg style="left:1690px;top:729px" width="16" height="14" viewBox="0 0 16 14" ><path d="M2.600.700h12.600l-1.800 12.600H.8z" fill="none" stroke="#cccccc" stroke-width="1.200" stroke-linejoin="round"/><path d="M4.300 4.200l3.300 2.600-4 2.600M8.200 9.800h3.600" fill="none" stroke="#cccccc" stroke-width="1.200"/></svg>
<span class="a" style="left:1710.00px;top:726.00px;line-height:19px;font-size:12px;letter-spacing:-0.519px;color:#cccccc;">esbuild</span>
<svg style="left:1754px;top:729px" width="13" height="13" viewBox="0 0 13 13" ><path d="M6.500 0v13M0 6.500h13" stroke="#cccccc" stroke-width="1.150"/></svg>
<svg style="left:1772px;top:733px" width="8" height="5" viewBox="0 0 8 5" ><path d="M.5.600l3.500 3.500L7.500.6" fill="none" stroke="#cccccc" stroke-width="1.100"/></svg>
<svg style="left:1792px;top:729.3px" width="13" height="12.7" viewBox="0 0 13 12.7" ><rect x=".6" y=".6" width="11.800" height="11.500" rx=".8" fill="none" stroke="#cccccc" stroke-width="1.150"/><path d="M6.500.6v11.500" stroke="#cccccc" stroke-width="1.150"/></svg>
<svg style="left:1816.3px;top:729px" width="11" height="13" viewBox="0 0 11 13" ><path d="M.3 2.700h10.400M3.600 2.700V1.200c0-.4.300-.7.700-.7h2.400c.4 0 .7.300.7.700v1.500M1.500 2.700v8.900c0 .5.400.9.900.9h6.200c.5 0 .9-.4.900-.9V2.700M4 5v5.500M5.500 5v5.500M7 5v5.500" fill="none" stroke="#cccccc" stroke-width="1.050"/></svg>
<svg style="left:1840px;top:734.5px" width="13" height="3" viewBox="0 0 13 3" ><circle cx="1.400" cy="1.500" r="1.150" fill="#cccccc"/><circle cx="6.400" cy="1.500" r="1.150" fill="#cccccc"/><circle cx="11.400" cy="1.500" r="1.150" fill="#cccccc"/></svg>
<svg style="left:1865.5px;top:732px" width="11" height="7" viewBox="0 0 11 7" ><path d="M.5 6.200L5.500 1.200l5 5" fill="none" stroke="#cccccc" stroke-width="1.250"/></svg>
<svg style="left:1889px;top:729.5px" width="12" height="12" viewBox="0 0 12 12" ><path d="M.6.600l10.800 10.800M11.400.600L.6 11.400" stroke="#cccccc" stroke-width="1.250"/></svg>
<div class="a" style="left:1906px;top:763px;width:1px;height:277px;background:#0c0c0c;"></div>
<div class="a" style="left:1907px;top:766px;width:4px;height:7px;background:#3b8eea;"></div>
<div class="a" style="left:1907px;top:820px;width:4px;height:7px;background:#6b6b6b;"></div>
<div class="a" style="left:1722px;top:1018px;width:198px;height:21.5px;background:#ffffff;"></div>
<div class="a" style="left:1716px;top:1016px;width:24px;height:24px;background:#f0562a;border-radius:3px;transform:rotate(-14deg)"></div>
<span class="a" style="left:1719.50px;top:1010.50px;line-height:35px;font-size:22px;font-weight:700;color:#ffffff;font-style:italic;transform:rotate(-14deg) scaleX(1.300);">S</span>
<span class="a" style="left:1748.00px;top:1017.50px;line-height:22px;font-size:14px;font-weight:700;letter-spacing:0.500px;color:#2a74c4;">英</span>
<svg style="left:1772px;top:1023px" width="10" height="12" viewBox="0 0 10 12" ><circle cx="2" cy="3" r="1.600" fill="#2a74c4"/><path d="M7.200 4.800a1.600 1.600 0 1 1 1.500 1.700c0 1.500-.6 2.500-1.800 3.300" fill="#2a74c4" stroke="#2a74c4" stroke-width=".6"/></svg>
<svg style="left:1791px;top:1020.5px" width="16" height="16" viewBox="0 0 16 16" ><circle cx="8" cy="8" r="7" fill="none" stroke="#2a74c4" stroke-width="1.500"/><path d="M5.700 4.800v2.400M10.300 4.800v2.400" stroke="#2a74c4" stroke-width="1.500"/><path d="M4.600 9.600c1.700 2.400 5.100 2.400 6.800 0" fill="none" stroke="#2a74c4" stroke-width="1.300"/></svg>
<svg style="left:1815px;top:1021px" width="12" height="16" viewBox="0 0 12 16" ><rect x="3.300" y=".2" width="5.400" height="9.600" rx="2.700" fill="#2a74c4"/><path d="M.8 6.500c0 7 10.400 7 10.400 0" fill="none" stroke="#2a74c4" stroke-width="1.400"/><path d="M6 12v2.500M3.200 14.800h5.600" stroke="#2a74c4" stroke-width="1.400"/></svg>
<svg style="left:1835px;top:1023.5px" width="16" height="11.5" viewBox="0 0 16 11.5" ><rect width="16" height="11.500" rx="1.500" fill="#2a74c4"/><path d="M2.200 3h1.600M5 3h1.600M7.800 3h1.600M10.600 3h1.600M2.200 5.700h1.600M5 5.700h1.600M7.800 5.700h1.600M10.600 5.700h1.600M13 3h1M13 5.700h1M4 8.500h8" stroke="#ffffff" stroke-width="1.300"/></svg>
<svg style="left:1858.5px;top:1021.5px" width="14" height="15" viewBox="0 0 14 15" ><circle cx="6" cy="3.800" r="3.300" fill="#c9c9c9"/><path d="M0 13c0-4.500 3-6 6-6s6 1.500 6 6z" fill="#c9c9c9"/><rect x="9.500" y="9.500" width="3.800" height="5" fill="#ffffff" stroke="#b0b0b0" stroke-width=".7"/></svg>
<svg style="left:1880.5px;top:1022px" width="14.5" height="14" viewBox="0 0 14.5 14" ><path d="M4.300.3C5 1.400 6 1.900 7.250 1.900S9.500 1.400 10.200.3l4.100 2.600-1.900 3.300-1.500-.8v8.300H3.600V5.400l-1.500.8L.2 2.900z" fill="#2a74c4"/></svg>
<svg style="left:1901.7px;top:1022px" width="14" height="14" viewBox="0 0 14 14" ><rect x="0" y="0" width="6.300" height="6.300" fill="#2a74c4"/><rect x="8.100" y=".6" width="5.200" height="5.200" fill="none" stroke="#2a74c4" stroke-width="1.200"/><rect x="0" y="7.700" width="6.300" height="6.300" fill="#2a74c4"/><rect x="7.700" y="7.700" width="6.300" height="6.300" fill="#2a74c4"/></svg>
<div class="a" style="left:0px;top:1040px;width:1920px;height:40px;background:linear-gradient(90deg,#203640 0%,#21363f 30%,#20343f 50%,#1f2f42 65%,#1b2941 85%,#1a2540 100%);"></div>
<svg style="left:16px;top:1051.8px" width="16.2" height="16.2" viewBox="0 0 16.2 16.2" ><path d="M0 2.300L6.600 1.400v6.300H0zM7.400 1.300L16.200 0v7.700H7.400zM0 8.500h6.600v6.300L0 13.900zM7.400 8.500h8.800v7.700l-8.800-1.300z" fill="#ffffff"/></svg>
<div class="a" style="left:51px;top:1040px;width:160px;height:40px;background:#4d6169;"></div>
<div class="a" style="left:51px;top:1078px;width:160px;height:2px;background:#8cc3ee;"></div>
<svg style="left:61px;top:1047.5px" width="24" height="24" viewBox="0 0 100 100" ><path fill="#2489ca" d="M70.900 99.300c1.600.6 3.400.6 5-.2l20.600-9.900c2.200-1 3.500-3.200 3.500-5.600V16.400c0-2.400-1.400-4.600-3.500-5.600L75.900.9c-2.100-1-4.500-.8-6.400.6-.3.2-.5.4-.8.7L29.400 38.100 12.200 25.100c-1.600-1.200-3.800-1.100-5.300.2l-5.500 5c-1.800 1.700-1.800 4.500 0 6.200L16.300 50 1.400 63.500c-1.800 1.700-1.800 4.500 0 6.200l5.500 5c1.500 1.400 3.700 1.500 5.300.2l17.200-13 39.400 35.900c.6.600 1.400 1.100 2.200 1.400zM75 27.300L45.100 50 75 72.700V27.300z"/><path fill="#1070b3" d="M29.400 38.100L12.200 25.100c-1.600-1.200-3.800-1.100-5.300.2l-5.500 5c-1.800 1.700-1.800 4.500 0 6.200L75 99c.5.200 1 .3 1.500.3L75 72.700z" opacity=".55"/><path fill="#3aa6ee" d="M75.900.9c-2.100-1-4.500-.8-6.400.6l6.400 3.100V95.400c0 1.500-.4 2.900-1.100 4 .4-.1.700-.2 1.100-.3l20.600-9.900c2.200-1 3.500-3.200 3.500-5.600V16.400c0-2.400-1.400-4.600-3.500-5.600z"/></svg>
<span class="a" style="left:89.00px;top:1048.50px;line-height:22px;font-size:13.5px;letter-spacing:-0.530px;color:#ffffff;">Vue2_4.vue - cha...</span>
<svg style="left:222px;top:1047.5px" width="24.5" height="24.5" viewBox="0 0 24.5 24.5" ><circle cx="12.250" cy="12.250" r="12" fill="#ffffff"/><path d="M12.250.250a12 12 0 0 1 10.400 6H12.250a6 6 0 0 0-5.650 4L2.500 5.250A12 12 0 0 1 12.250.250z" fill="#ea4335"/><path d="M22.650 6.250a12 12 0 0 1-10.900 18l5.700-9a6 6 0 0 0 .2-6z" fill="#fbbc05"/><path d="M11.750 24.250A12 12 0 0 1 2.500 5.250l4.100 5.300a6 6 0 0 0 7.600 7.400z" fill="#34a853"/><circle cx="12.250" cy="12.250" r="5.500" fill="#ffffff"/><circle cx="12.250" cy="12.250" r="4.400" fill="#4285f4"/></svg>
<span class="a" style="left:250.20px;top:1048.50px;line-height:22px;font-size:13.5px;letter-spacing:-0.070px;color:#ffffff;">Vite App - Googl...</span>
<div class="a" style="left:216px;top:1078px;width:152px;height:2px;background:#8cc3ee;"></div>
<svg style="left:386px;top:1050px" width="14.5" height="21" viewBox="0 0 14.5 21" ><path d="M1.500 1.200L10.500 0l2.500 1.500v17l-3 2.500-8.500-1.500z" fill="#f5d36b"/><path d="M10.500 0l3.500 2v17l-4 2z" fill="#e3b341"/><path d="M5 9l3 1.500v10L5 20z" fill="#fbe9a6"/></svg>
<span class="a" style="left:411.30px;top:1048.50px;line-height:22px;font-size:13.5px;letter-spacing:-0.433px;color:#ffffff;">src</span>
<div class="a" style="left:377.5px;top:1078px;width:151px;height:2px;background:#8cc3ee;"></div>
<svg style="left:545px;top:1048px" width="22" height="22" viewBox="0 0 22 22" ><rect x="9" y="2" width="12.500" height="18" rx="1" fill="#f4f4f4"/><path d="M12 6h7M12 9h7M12 12h7M12 15h7" stroke="#d24726" stroke-width="1.300"/><path d="M0 2.300L13 0v22L0 19.700z" fill="#d24726"/></svg>
<span class="a" style="left:548.50px;top:1049.50px;line-height:19px;font-size:12px;font-weight:700;color:#ffffff;">P</span>
<span class="a" style="left:571.50px;top:1049.00px;line-height:21px;font-size:13px;letter-spacing:-0.346px;color:#ffffff;">vuejs3.x-第2章Vue...</span>
<div class="a" style="left:538.5px;top:1078px;width:151.5px;height:2px;background:#8cc3ee;"></div>
<svg style="left:705px;top:1048px" width="22" height="22" viewBox="0 0 22 22" ><rect x="9" y="2" width="12.500" height="18" rx="1" fill="#f4f4f4"/><path d="M12 6h7M12 9h7M12 12h7M12 15h7" stroke="#d24726" stroke-width="1.300"/><path d="M0 2.300L13 0v22L0 19.700z" fill="#d24726"/></svg>
<span class="a" style="left:708.50px;top:1049.50px;line-height:19px;font-size:12px;font-weight:700;color:#ffffff;">P</span>
<span class="a" style="left:731.50px;top:1048.50px;line-height:22px;font-size:13.5px;letter-spacing:-0.428px;color:#ffffff;">V4.4.1 - PowerPoi...</span>
<div class="a" style="left:698.5px;top:1078px;width:151.5px;height:2px;background:#8cc3ee;"></div>
<svg style="left:1596px;top:1052.5px" width="16.5" height="15.5" viewBox="0 0 16.5 15.5" ><rect x="1" y="1" width="14.500" height="13.500" rx="4" fill="#f6a13a"/><circle cx="8.250" cy="7.750" r="4.300" fill="#fde3b5"/><circle cx="8.250" cy="7.750" r="2.600" fill="#f08a1d"/><circle cx="3" cy="2.500" r="1.800" fill="#f6a13a"/><circle cx="13.500" cy="2.500" r="1.800" fill="#f6a13a"/><circle cx="3" cy="13" r="1.800" fill="#f6a13a"/><circle cx="13.500" cy="13" r="1.800" fill="#f6a13a"/></svg>
<svg style="left:1668px;top:1053px" width="16" height="14" viewBox="0 0 16 14" ><rect x="4.500" y=".6" width="11" height="8.500" fill="none" stroke="#ffffff" stroke-width="1.100"/><path d="M10 9v3M6.500 12.600h7" stroke="#ffffff" stroke-width="1.100"/><rect x=".6" y="1.500" width="3.400" height="3.400" fill="#1e2d42" stroke="#ffffff" stroke-width="1"/><path d="M2.300 5v7.600h3" fill="none" stroke="#ffffff" stroke-width="1"/></svg>
<svg style="left:1716px;top:1052.5px" width="16" height="16" viewBox="0 0 16 16" ><rect x=".5" y=".5" width="14" height="14.500" rx="1.500" fill="#f3f5f4"/><path d="M3 3.500c3 0 5.500 2 6.500 5l2 3.500-2.500-.8L7.500 13 6 9C4.500 7.500 3.500 6 3 3.500z" fill="none" stroke="#6c8a83" stroke-width=".9"/><circle cx="12.200" cy="12.300" r="3.300" fill="#3fae49"/><path d="M11.200 10.600l2.600 1.700-2.600 1.700z" fill="#ffffff"/></svg>
<span class="a" style="left:1740.75px;top:1048.50px;line-height:22px;font-size:13.5px;letter-spacing:-0.250px;color:#ffffff;">英</span>
<div class="a" style="left:1769px;top:1052.500px;width:14px;height:14px;background:#e8452c;border-radius:2px;transform:rotate(-14deg)"></div>
<span class="a" style="left:1771.50px;top:1049.00px;line-height:21px;font-size:13px;font-weight:700;color:#ffffff;font-style:italic;transform:rotate(-14deg) scaleX(1.150);">S</span>
<span class="a" style="left:1815.75px;top:1040.75px;line-height:20px;font-size:12.5px;letter-spacing:-0.256px;color:#ffffff;">14:04</span>
<span class="a" style="left:1801.00px;top:1059.50px;line-height:20px;font-size:12.5px;letter-spacing:0.377px;color:#ffffff;">2025/3/10</span>
<svg style="left:1878.75px;top:1052.5px" width="15.5" height="15" viewBox="0 0 15.5 15" ><path d="M.6.600h14.300v10.500h-4.400l-3.100 3.100v-3.100H.6z" fill="none" stroke="#ffffff" stroke-width="1.150" stroke-linejoin="miter"/></svg>
<div class="a" style="left:1915px;top:1040px;width:1px;height:40px;background:#5a6678;"></div>
<svg style="left:1075.5px;top:444.5px" width="8" height="17" viewBox="0 0 8 17" ><path d="M.5 1h2.700c.5 0 .8.300.8.800.0-.500.300-.800.800-.800h2.700M.5 16h2.700c.5 0 .8-.300.8-.800 0 .500.300.800.800.800h2.700M4 1.800v13.400" fill="none" stroke="#000000" stroke-width="2.400" opacity=".55"/><path d="M.5 1h2.700c.5 0 .8.300.8.800 0-.500.300-.800.800-.800h2.700M.5 16h2.700c.5 0 .8-.300.8-.800 0 .500.300.800.800.800h2.700M4 1.800v13.400" fill="none" stroke="#ffffff" stroke-width="1"/></svg>
</body></html>
